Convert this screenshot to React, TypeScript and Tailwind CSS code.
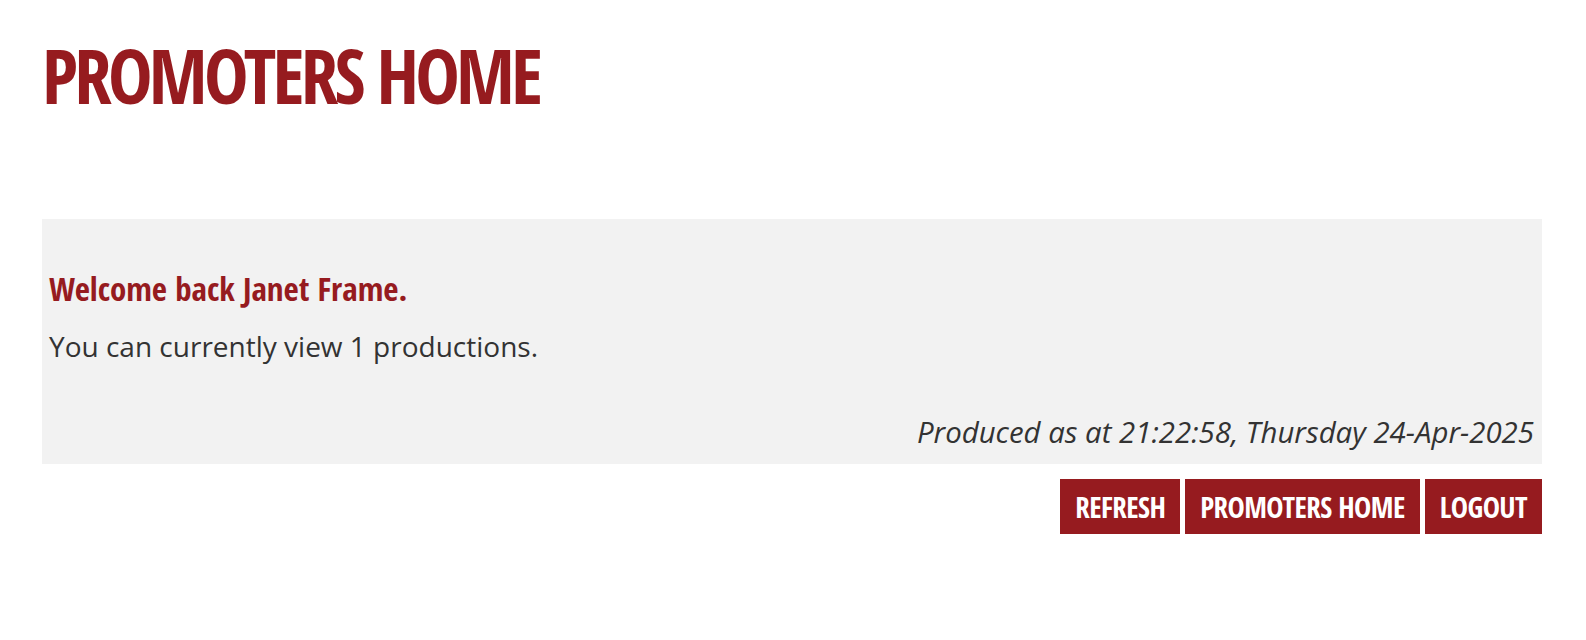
const heading = 'font-["Open_Sans_Condensed","Roboto_Condensed",sans-serif] font-bold'

function NavButton({ label }: { label: string }) {
  return (
    <button className={`${heading} h-[55px] bg-[#961b1f] px-[15px] text-[29px] leading-[55px] tracking-[-0.02em] text-white uppercase`}>
      {label}
    </button>
  )
}

export default function App() {
  return (
    <div className="min-h-[640px] bg-white pt-[38px] pr-[44px] pl-[42px] font-['Open_Sans',sans-serif] text-[#333333]">
      <h1 className={`${heading} text-[75px] leading-none tracking-[-0.05em] text-[#961b1f]`}>PROMOTERS HOME</h1>

      <div className="mt-[106px] flex h-[245px] flex-col bg-[#f2f2f2] pt-[50px] pr-[8px] pl-[7px]">
        <h2 className={`${heading} text-[33px] leading-[40px] text-[#961b1f]`}>Welcome back Janet Frame.</h2>
        <p className="mt-[19px] text-[28px] leading-[36px]">You can currently view 1 productions.</p>
        <p className="mt-[50px] text-right text-[29.4px] leading-[36px] italic">
          Produced as at 21:22:58, Thursday 24-Apr-2025
        </p>
      </div>

      <div className="mt-[15px] flex justify-end gap-[5px]">
        <NavButton label="Refresh" />
        <NavButton label="Promoters Home" />
        <NavButton label="Logout" />
      </div>
    </div>
  )
}
